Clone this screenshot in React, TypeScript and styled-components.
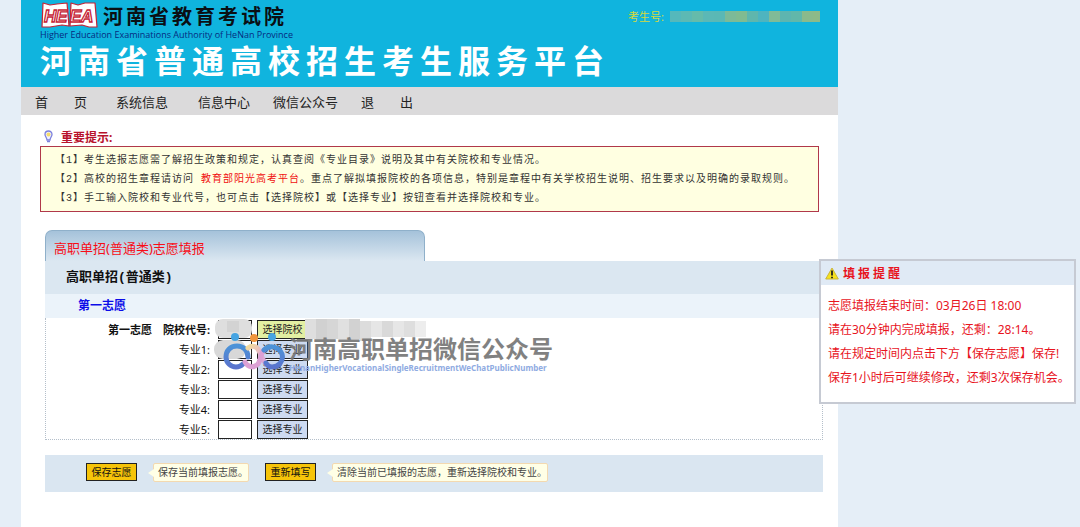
import React from 'react';
import styled, { createGlobalStyle } from 'styled-components';

const GlobalStyle = createGlobalStyle`
  * { box-sizing: border-box; }
  body {
    margin: 0;
    background: #e5eef7;
    color: #222;
    font-family: "Noto Sans", "Noto Sans CJK SC", sans-serif;
    font-size: 12px;
  }
  button, input { font: inherit; }
  a { color: inherit; text-decoration: none; }
`;

const Page = styled.div`
  position: relative;
  min-height: 100vh;
  padding: 0 242px 0 21px;
  display: flex;
`;

const Shell = styled.div`
  flex: 1;
  min-width: 0;
  background: #fff;
`;

const Header = styled.header`
  display: flex;
  justify-content: space-between;
  height: 87px;
  padding: 2px 18px 0 19px;
  background: #10b4de;
`;

const Brand = styled.div`
  white-space: nowrap;
`;

const Agency = styled.div`
  display: flex;
  align-items: center;
  gap: 5px;
  height: 27px;
  color: #0a0f14;
  font-size: 20px;
  font-weight: 700;
  letter-spacing: 3px;
`;

const AgencyEnglish = styled.div`
  height: 12px;
  line-height: 12px;
  color: #062a80;
  font-family: "Open Sans", sans-serif;
  font-size: 9px;
`;

const PlatformTitle = styled.h1`
  margin: 0;
  color: #fff;
  font-size: 32px;
  font-weight: 700;
  letter-spacing: 6px;
  line-height: 40px;
`;

const Candidate = styled.div`
  display: flex;
  align-items: center;
  gap: 6px;
  height: 28px;
  color: #d3d93c;
  font-size: 11px;
`;

const Mosaic = styled.svg`
  display: block;
`;

const Nav = styled.nav`
  display: flex;
  align-items: center;
  height: 28px;
  padding-left: 14px;
  background: #dbdadb;
  font-size: 13px;
  white-space: pre;
`;

const NavLink = styled.a<{ $gap?: number }>`
  margin-right: ${p => p.$gap ?? 22}px;
`;

const Tips = styled.section`
  padding: 13px 19px 0;
`;

const TipsHeading = styled.h2`
  display: flex;
  align-items: center;
  gap: 8px;
  height: 18px;
  margin: 0 0 0 4px;
  color: #b8122c;
  font-size: 12px;
`;

const TipsList = styled.div`
  padding: 4px 14px 3px;
  border: 1px solid #b0384a;
  background: #ffffe1;
  color: #333;
  font-family: "Liberation Mono", "Noto Sans CJK SC", monospace;
  font-size: 10px;
  letter-spacing: 1px;
  line-height: 19px;
`;

const Tip = styled.p`
  margin: 0;
`;

const TipLink = styled.a`
  && { color: #f01010; }
`;

const Form = styled.form`
  padding: 18px 15px 0 24px;
`;

const Tab = styled.div`
  width: 380px;
  height: 31px;
  padding: 3px 8px 0;
  border: 1px solid #8fb0ca;
  border-bottom: 0;
  border-radius: 7px 7px 0 0;
  background: linear-gradient(#a5c2da, #dbe7f1);
  color: #f80d17;
  font-size: 13px;
  line-height: 28px;
`;

const Category = styled.div`
  padding-left: 21px;
  background: #dbe7f1;
  color: #111;
  font-family: "Liberation Mono", "Noto Sans CJK SC", monospace;
  font-size: 13px;
  font-weight: 700;
  line-height: 33px;
`;

const Choice = styled.div`
  padding-left: 33px;
  background: #ebf3fa;
  color: #0c0ce8;
  font-weight: 700;
  line-height: 24px;
`;

const Fields = styled.div`
  position: relative;
  padding-top: 1px;
  border: 1px dotted #b4bfca;
  border-top: 0;
`;

const Row = styled.div`
  display: grid;
  grid-template-columns: 167px 34px 51px;
  column-gap: 5px;
  height: 20px;
  align-items: center;
  font-size: 11px;
`;

const RowLabel = styled.label<{ $strong?: boolean }>`
  padding-right: 3px;
  color: #111;
  font-weight: ${p => (p.$strong ? 700 : 400)};
  text-align: right;
  white-space: pre;
`;

const CodeInput = styled.input`
  width: 100%;
  height: 19px;
  padding: 0 3px;
  border: 1px solid #222;
  border-radius: 0;
  background: #fff;
`;

const PickButton = styled.button<{ $school?: boolean }>`
  height: 19px;
  padding: 0;
  border: 1px solid #222;
  background: ${p => (p.$school ? '#e3efa2' : '#cddaf1')};
  color: #222;
  font-size: 10px;
  line-height: 17px;
`;

const Cover = styled.svg`
  position: absolute;
  left: 168px;
  top: 0;
  pointer-events: none;
`;

const Watermark = styled.div`
  position: absolute;
  left: 176px;
  top: 15px;
  display: flex;
  gap: 3px;
  pointer-events: none;
  white-space: nowrap;
`;

const WatermarkText = styled.div`
  padding-top: 2px;
  color: #777;
  font-size: 24px;
  font-weight: 700;
  line-height: 28px;
  opacity: 0.92;
`;

const WatermarkEnglish = styled.div`
  color: #8fabe2;
  font-family: "Noto Sans", sans-serif;
  font-size: 8px;
  font-weight: 700;
  line-height: 10px;
`;

const Actions = styled.div`
  display: flex;
  align-items: flex-start;
  height: 37px;
  margin-top: 15px;
  padding: 8px 0 0 41px;
  background: #dae6f1;
  font-size: 10px;
  white-space: nowrap;
`;

const ActionButton = styled.button`
  width: 51px;
  height: 18px;
  padding: 0;
  border: 1px solid #222;
  background: #f6c40a;
  color: #111;
  line-height: 16px;
`;

const Hint = styled.span`
  position: relative;
  height: 19px;
  margin: 0 16px;
  padding-left: 4px;
  border: 1px solid #f3d9b0;
  border-radius: 2px;
  background: #ffffe6;
  color: #444;
  line-height: 17px;

  &::before {
    content: "";
    position: absolute;
    left: -6px;
    top: 5px;
    border: 4px solid transparent;
    border-left: 0;
    border-right: 6px solid #ffffe6;
  }
`;

const Reminder = styled.aside`
  position: absolute;
  top: 259px;
  right: 4px;
  width: 257px;
  border: 2px solid #c6cad3;
  background: #fff;
  color: #e8141e;
`;

const ReminderHeading = styled.h2`
  display: flex;
  align-items: center;
  gap: 4px;
  height: 24px;
  margin: 0;
  padding-left: 4px;
  background: #e0eaf5;
  font-size: 12px;
  letter-spacing: 3px;
`;

const ReminderBody = styled.div`
  padding: 9px 0 12px 7px;
  white-space: nowrap;
`;

const ReminderLine = styled.p`
  margin: 0;
  line-height: 24px;
`;

const HeeaLogo = () => (
  <svg width="58" height="27" viewBox="0 0 58 27" role="img" aria-label="HEEA">
    <g fill="#fff" stroke="#c62335" strokeWidth="1.2" strokeLinejoin="round">
      <path d="M3 1L10 3L17 2L27 1L29 24L22 23L10 25L2 25Z" />
      <path d="M31 1L38 3L45 1L55 1L57 25L49 25L42 23L30 24Z" />
    </g>
    <g
      fill="#fff"
      stroke="#c62335"
      strokeWidth="1.3"
      fontFamily="Liberation Sans"
      fontStyle="italic"
      fontWeight="700"
      fontSize="17"
      letterSpacing="0"
    >
      <text x="4" y="20">H</text>
      <text x="16" y="20">E</text>
      <text x="30" y="20">E</text>
      <text x="41" y="20">A</text>
    </g>
  </svg>
);

const Bulb = () => (
  <svg width="9" height="14" viewBox="0 0 9 14" aria-hidden="true">
    <path
      d="M4.500 1C2.300 1 1 2.600 1 4.500C1 6.500 2.800 7.500 3 10H6C6.200 7.500 8 6.500 8 4.500C8 2.600 6.700 1 4.500 1Z"
      fill="#eef0ff"
      stroke="#7c80dc"
      strokeWidth="1.300"
    />
    <circle cx="4.500" cy="4.500" r="2" fill="#f5dc6a" />
    <path d="M3 11.500H6" stroke="#7c80dc" strokeWidth="1.500" />
  </svg>
);

const Warning = () => (
  <svg width="14" height="13" viewBox="0 0 14 13" aria-hidden="true">
    <path d="M7 1L13.300 12H0.700Z" fill="#f7e21c" stroke="#c9b53c" strokeLinejoin="round" />
    <path d="M7 3.500V8.500M7 9.700V11.300" stroke="#222" strokeWidth="1.800" />
  </svg>
);

const PeopleLogo = () => (
  <svg width="64" height="38" viewBox="0 0 64 38" aria-hidden="true">
    <defs>
      <linearGradient id="ribbon" x1="0" y1="0" x2="1" y2="1">
        <stop offset="0" stopColor="#f3dc9c" />
        <stop offset="0.500" stopColor="#e6b3cf" />
        <stop offset="1" stopColor="#cf9add" />
      </linearGradient>
      <linearGradient id="ring" x1="0" y1="0" x2="0" y2="1">
        <stop offset="0" stopColor="#4c93d8" />
        <stop offset="1" stopColor="#5a74cd" />
      </linearGradient>
    </defs>
    <g fill="none" strokeLinecap="round" strokeWidth="5">
      <path d="M26 24C26 17 21 13 15 13C8 13 4 18 4 24C4 30 9 34 14 34C17 34 19 33 21 31" stroke="url(#ring)" />
      <path d="M26 15C30 12 35 13 37 18C40 24 42 31 47 33" stroke="url(#ribbon)" />
      <path d="M23 29C26 35 32 35 36 31C39 27 38 21 42 17" stroke="#dca0d4" />
      <path d="M42 17C48 11 57 14 60 21C62 29 56 34 50 34C47 34 45 32 44 30" stroke="url(#ring)" />
    </g>
    <circle cx="13" cy="4" r="4" fill="#46a4e2" />
    <circle cx="32" cy="5" r="4" fill="#f0953c" />
    <circle cx="50" cy="4" r="4" fill="#46a4e2" />
  </svg>
);

const idBlocks = ['#55b8bb', '#5cb9b4', '#65bbab', '#5bb8b6', '#5ab8b5', '#7cba98', '#80bb91', '#5fb6ad', '#4eb4bf', '#80bb97', '#5db5b0', '#61b7aa', '#8aba8c', '#8dba88'];
const grayBlocks = ['#dedede', '#d1d1d1', '#d6d6d6', '#e0e0e0', '#d2d2d2', '#dcdcdc', '#e6e6e6', '#d9d9d9', '#e6e6e6', '#dedede', '#ededed'];

const majors = [1, 2, 3, 4, 5];

export default function App() {
  return (
    <Page>
      <GlobalStyle />
      <Shell>
        <Header>
          <Brand>
            <Agency>
              <HeeaLogo />
              河南省教育考试院
            </Agency>
            <AgencyEnglish>Higher Education Examinations Authority of HeNan Province</AgencyEnglish>
            <PlatformTitle>河南省普通高校招生考生服务平台</PlatformTitle>
          </Brand>
          <Candidate>
            考生号:
            <Mosaic width="150" height="11" aria-hidden="true">
              {idBlocks.map((color, i) => (
                <rect key={i} x={i * 11} width="11" height="11" fill={color} />
              ))}
            </Mosaic>
          </Candidate>
        </Header>
        <Nav>
          <NavLink href="#home" $gap={29}>首　　页</NavLink>
          <NavLink href="#system" $gap={30}>系统信息</NavLink>
          <NavLink href="#info" $gap={23}>信息中心</NavLink>
          <NavLink href="#wechat" $gap={23}>微信公众号</NavLink>
          <NavLink href="#logout">退　　出</NavLink>
        </Nav>

        <Tips>
          <TipsHeading>
            <Bulb />
            重要提示:
          </TipsHeading>
          <TipsList>
            <Tip>【1】考生选报志愿需了解招生政策和规定，认真查阅《专业目录》说明及其中有关院校和专业情况。</Tip>
            <Tip>
              【2】高校的招生章程请访问 <TipLink href="#gaokao">教育部阳光高考平台</TipLink>。重点了解拟填报院校的各项信息，特别是章程中有关学校招生说明、招生要求以及明确的录取规则。
            </Tip>
            <Tip>【3】手工输入院校和专业代号，也可点击【选择院校】或【选择专业】按钮查看并选择院校和专业。</Tip>
          </TipsList>
        </Tips>

        <Form onSubmit={e => e.preventDefault()}>
          <Tab>高职单招(普通类)志愿填报</Tab>
          <Category>高职单招(普通类)</Category>
          <Choice>第一志愿</Choice>
          <Fields>
            <Row>
              <RowLabel htmlFor="school" $strong>第一志愿　院校代号:</RowLabel>
              <CodeInput id="school" />
              <PickButton type="button" $school>选择院校</PickButton>
            </Row>
            {majors.map(n => (
              <Row key={n}>
                <RowLabel htmlFor={`major${n}`}>专业{n}:</RowLabel>
                <CodeInput id={`major${n}`} />
                <PickButton type="button">选择专业</PickButton>
              </Row>
            ))}
            <Cover width="220" height="44" aria-hidden="true">
              <rect x="1" y="1" width="37" height="19" rx="8" fill="#dedede" />
              <rect x="0" y="22" width="32" height="19" rx="9" fill="#d8d8d8" />
              <rect x="13" y="3" width="12" height="11" fill="#d3d3d3" />
              {grayBlocks.map((color, i) => (
                <rect
                  key={i}
                  x={91 + i * 11}
                  y={i < 5 ? 1 : 3}
                  width="11"
                  height={i < 6 ? 20 : 16}
                  fill={color}
                />
              ))}
            </Cover>
            <Watermark>
              <PeopleLogo />
              <div>
                <WatermarkText>河南高职单招微信公众号</WatermarkText>
                <WatermarkEnglish>HenanHigherVocationalSingleRecruitmentWeChatPublicNumber</WatermarkEnglish>
              </div>
            </Watermark>
          </Fields>
          <Actions>
            <ActionButton type="submit">保存志愿</ActionButton>
            <Hint>保存当前填报志愿。</Hint>
            <ActionButton type="reset">重新填写</ActionButton>
            <Hint>清除当前已填报的志愿，重新选择院校和专业。</Hint>
          </Actions>
        </Form>
      </Shell>

      <Reminder>
        <ReminderHeading>
          <Warning />
          填报提醒
        </ReminderHeading>
        <ReminderBody>
          <ReminderLine>志愿填报结束时间：03月26日 18:00</ReminderLine>
          <ReminderLine>请在30分钟内完成填报，还剩：28:14。</ReminderLine>
          <ReminderLine>请在规定时间内点击下方【保存志愿】保存!</ReminderLine>
          <ReminderLine>保存1小时后可继续修改，还剩3次保存机会。</ReminderLine>
        </ReminderBody>
      </Reminder>
    </Page>
  );
}
